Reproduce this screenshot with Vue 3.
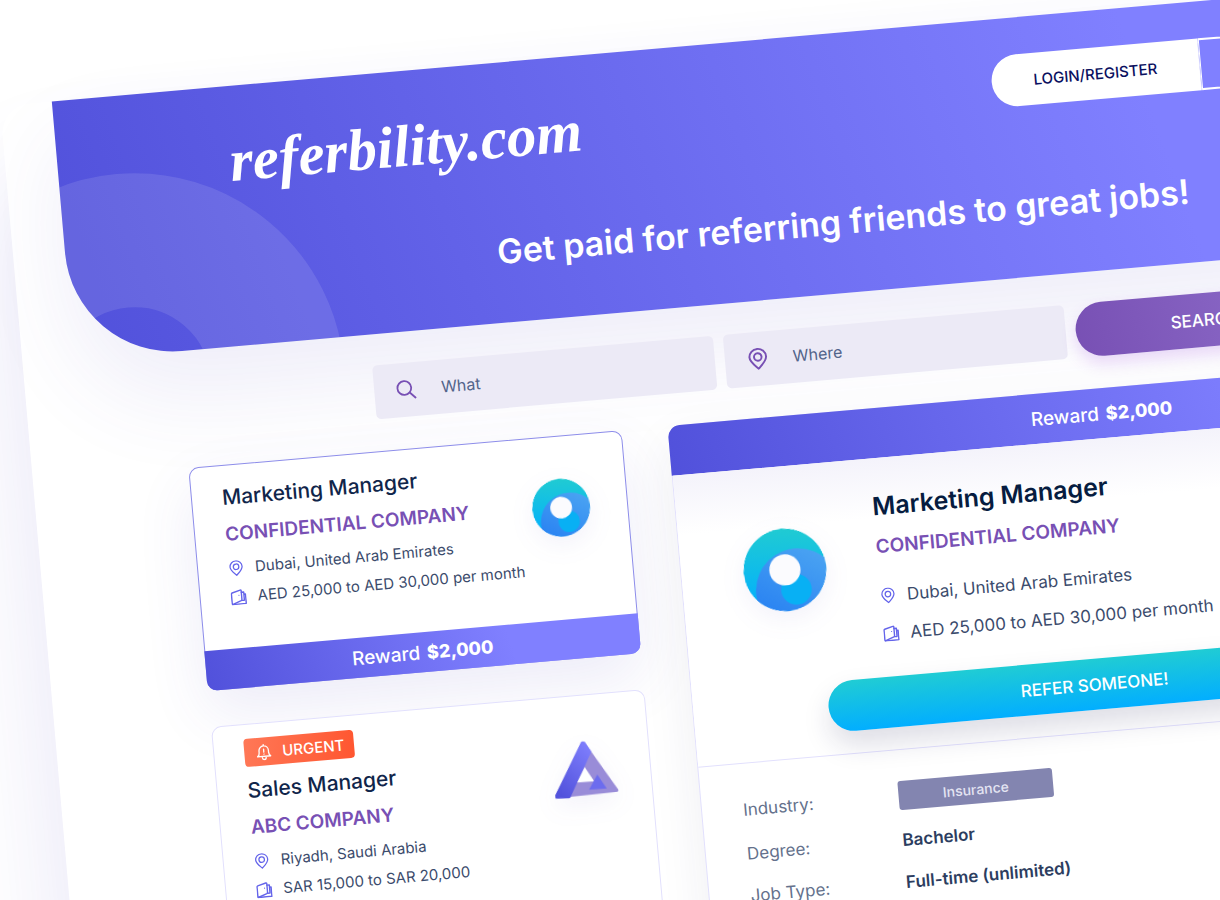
<script setup>
import { h } from 'vue'

const Pin = () =>
  h('svg', { viewBox: '0 0 16 18', fill: 'none', stroke: 'currentColor', 'aria-hidden': 'true' }, [
    h('path', { d: 'M8 17C4.6 13.6 1.2 11 1.2 7.4A6.8 6.6 0 0 1 14.8 7.4C14.8 11 11.4 13.6 8 17Z', 'stroke-linejoin': 'round' }),
    h('circle', { cx: 8, cy: 7.4, r: 3.1 }),
  ])

const Wallet = () =>
  h('svg', { viewBox: '0 0 16 16', fill: 'none', stroke: 'currentColor', 'stroke-linejoin': 'round', 'stroke-linecap': 'round', 'aria-hidden': 'true' }, [
    h('path', { d: 'M1 4.4Q1 3.6 1.8 3.4L10 1.2Q11 1 11 2V10.6Q11 11.4 10.2 11.8L1.4 15Q1 15 1 14.4Z' }),
    h('path', { d: 'M11 3.4H13.4V11.6H11M13.4 5.6H15V15H1.6' }),
    h('circle', { cx: 8.4, cy: 6.2, r: 0.6, fill: 'currentColor', stroke: 'none' }),
  ])

const Ring = () =>
  h('svg', { viewBox: '0 0 250 250', 'aria-hidden': 'true' }, [
    h('defs', [
      h('linearGradient', { id: 'sea', x1: 0, y1: 0, x2: 0, y2: 1 }, [
        h('stop', { offset: '0', 'stop-color': '#20cbd2' }),
        h('stop', { offset: '1', 'stop-color': '#00aeff' }),
      ]),
      h('linearGradient', { id: 'sky', x1: 0.7, y1: 0, x2: 0.3, y2: 0.8 }, [
        h('stop', { offset: '0', 'stop-color': '#4aa3f2' }),
        h('stop', { offset: '1', 'stop-color': '#2b84f2' }),
      ]),
      h('clipPath', { id: 'disc' }, [h('circle', { cx: 125, cy: 125, r: 125 })]),
    ]),
    h('g', { transform: 'rotate(5 125 125)', 'clip-path': 'url(#disc)' }, [
      h('circle', { cx: 125, cy: 125, r: 125, fill: 'url(#sea)' }),
      h('circle', { cx: 165, cy: 187, r: 127, fill: 'url(#sky)' }),
      h('circle', { cx: 160, cy: 184, r: 46, fill: '#08b0f4' }),
      h('circle', { cx: 125, cy: 125, r: 47, fill: '#fbfbfe' }),
    ]),
  ])

const Delta = () =>
  h('svg', { viewBox: '100 50 200 200', 'aria-hidden': 'true' }, [
    h('defs', [
      h('linearGradient', { id: 'edge', x1: 0.8, y1: 0, x2: 0.2, y2: 1 }, [
        h('stop', { offset: '0', 'stop-color': '#7c7cfb' }),
        h('stop', { offset: '1', 'stop-color': '#5252dc' }),
      ]),
    ]),
    h('g', { transform: 'rotate(5 200 150)', 'stroke-linejoin': 'round', 'stroke-width': 10 }, [
      h('path', { d: 'M190 75L287 211L111 230Z', fill: '#998cd8', stroke: '#998cd8' }),
      h('path', { d: 'M186 73L110 231L147 230L207 98L190 73Z', fill: 'url(#edge)', stroke: 'url(#edge)' }),
      h('path', { d: 'M193 143L171 189L221 185Z', fill: '#fff' }),
      h('path', { d: 'M230 165L206 210L258 206Z', fill: '#6c6cee' }),
    ]),
  ])

const jobs = [
  {
    title: 'Marketing Manager', company: 'CONFIDENTIAL COMPANY', place: 'Dubai, United Arab Emirates',
    pay: 'AED 25,000 to AED 30,000 per month', logo: Ring, active: true, reward: '$2,000',
  },
  {
    title: 'Sales Manager', company: 'ABC COMPANY', place: 'Riyadh, Saudi Arabia',
    pay: 'SAR 15,000 to SAR 20,000', logo: Delta, urgent: true, reward: '$2,000',
  },
]
const current = jobs[0]
</script>

<template>
  <div class="stage">
    <div class="sheet">
      <header class="hero">
        <div class="art"><span class="arc"></span></div>
        <div class="bar">
          <a class="brand" href="#">referbility.com</a>
          <nav class="account">
            <button class="login" type="button">LOGIN/REGISTER</button>
            <button class="ghost" type="button" aria-label="Account menu"></button>
          </nav>
        </div>
        <h1>Get paid for referring friends to great jobs!</h1>
      </header>

      <form class="search" @submit.prevent>
        <label class="field">
          <svg class="glass" viewBox="0 0 22 22" fill="none" stroke="currentColor" stroke-width="2" aria-hidden="true">
            <circle cx="9" cy="9" r="7.6" /><path d="M14.5 14.5L21 21" />
          </svg>
          <input type="text" placeholder="What" aria-label="What" />
        </label>
        <label class="field">
          <Pin class="marker" />
          <input type="text" placeholder="Where" aria-label="Where" />
        </label>
        <button class="go" type="submit">SEARCH</button>
      </form>

      <main class="board">
        <section class="list">
          <article v-for="job in jobs" :key="job.title" class="card" :class="{ active: job.active, urgent: job.urgent }">
            <div class="body">
              <div class="info">
                <span v-if="job.urgent" class="badge">
                  <svg viewBox="0 0 18 18" fill="none" stroke="currentColor" stroke-width="1.4" stroke-linejoin="round" stroke-linecap="round" aria-hidden="true">
                    <path d="M9 1.2V2.6M2 13.6C3.4 12.6 4 11.4 4 9.6V7.6A5 5 0 0 1 14 7.6V9.6C14 11.4 14.6 12.6 16 13.6ZM7 14V15A2 2 0 0 0 11 15V14M9 6V9.2M9 11.2V11.3" />
                  </svg>
                  URGENT
                </span>
                <h2>{{ job.title }}</h2>
                <p class="company">{{ job.company }}</p>
                <p class="fact"><Pin />{{ job.place }}</p>
                <p class="fact"><Wallet />{{ job.pay }}</p>
              </div>
              <div class="logo"><component :is="job.logo" /></div>
            </div>
            <footer class="reward">Reward <strong>{{ job.reward }}</strong></footer>
          </article>
        </section>

        <section class="panel">
          <div class="reward">Reward <strong>{{ current.reward }}</strong></div>
          <div class="summary">
            <div class="lead">
              <div class="logo"><Ring /></div>
              <div class="info">
                <h2>{{ current.title }}</h2>
                <p class="company">{{ current.company }}</p>
                <p class="fact"><Pin />{{ current.place }}</p>
                <p class="fact"><Wallet />{{ current.pay }}</p>
              </div>
            </div>
            <button class="refer" type="button">REFER SOMEONE!</button>
          </div>
          <dl class="details">
            <div><dt>Industry:</dt><dd class="tag">Insurance</dd></div>
            <div><dt>Degree:</dt><dd>Bachelor</dd></div>
            <div><dt>Job Type:</dt><dd>Full-time (unlimited)</dd></div>
          </dl>
        </section>
      </main>
    </div>
  </div>
</template>

<style>
body {
  margin: 0;
  background: #fff;
}
</style>

<style scoped>
* {
  box-sizing: border-box;
}
h1, h2, p, dl, dd {
  margin: 0;
}
button, input {
  font: inherit;
  border: 0;
  padding: 0;
}
.stage {
  height: 100vh;
  overflow: hidden;
  padding-top: 106px;
  font-family: Inter, "Open Sans", sans-serif;
  color: #10254a;
}
.sheet {
  width: calc(100% + 388px);
  min-height: 1300px;
  padding-left: 52px;
  background: #fff;
  border-radius: 30px 0 0 0;
  box-shadow: 0 80px 110px rgba(80, 66, 190, 0.14);
  transform: rotate(-5deg);
  transform-origin: 0 0;
}
.hero {
  position: relative;
  height: 260px;
  padding: 37px 200px 0 172px;
  border-radius: 0 0 0 108px;
  background: linear-gradient(75deg, #5151db, #8080ff 70%);
  box-shadow: 0 46px 90px rgba(80, 66, 190, 0.09);
}
.art {
  position: absolute;
  inset: 0;
  overflow: hidden;
  border-radius: inherit;
}
.arc {
  position: absolute;
  left: -152px;
  top: 78px;
  width: 420px;
  height: 420px;
  border: 134px solid rgba(255, 255, 255, 0.11);
  border-radius: 50%;
}
.bar {
  position: relative;
  display: flex;
  justify-content: space-between;
  align-items: flex-start;
}
.brand {
  color: #fff;
  font: italic 700 59px/76px "Liberation Serif", serif;
  text-decoration: none;
}
.account {
  display: flex;
  height: 52px;
}
.account button {
  width: 209px;
}
.account .login {
  border-right: 1px solid #e8e8ff;
  border-radius: 26px 0 0 26px;
  background: #fff;
  color: #0a1060;
  font-size: 15px;
  font-weight: 500;
}
.account .ghost {
  border: 2px solid #fff;
  border-left-width: 1px;
  border-radius: 0 26px 26px 0;
  background: transparent;
}
h1 {
  position: relative;
  margin: 51px -172px 0 -144px;
  text-align: center;
  color: #fff;
  font-size: 34px;
  line-height: 50px;
  font-weight: 600;
}
.search {
  position: relative;
  display: flex;
  justify-content: center;
  gap: 10px;
  padding-top: 31px;
}
.field {
  display: flex;
  align-items: center;
  width: 342px;
  height: 54px;
  padding-left: 22px;
  border-radius: 5px;
  background: #eceaf6;
  color: #7850b4;
}
.field svg {
  flex: none;
  width: 22px;
  height: 22px;
  margin-right: 24px;
}
.field .glass {
  width: 20px;
  height: 20px;
  margin-right: 25px;
}
.marker {
  stroke-width: 1.6;
}
.field input {
  flex: 1;
  min-width: 0;
  background: transparent;
  font-size: 16px;
  outline: none;
}
.field input::placeholder {
  color: #52648a;
  opacity: 1;
}
.go {
  width: 260px;
  height: 54px;
  border-radius: 27px;
  background: linear-gradient(80deg, #7850b4, #9070cc);
  box-shadow: 0 8px 16px rgba(150, 70, 220, 0.2);
  color: #fff;
  font-size: 17px;
  font-weight: 500;
}
.board {
  position: relative;
  display: grid;
  grid-template-columns: 435px 1fr;
  gap: 46px;
  margin: 32px 104px 0;
  align-items: start;
}
.list {
  display: grid;
  gap: 36px;
}
.card {
  border-radius: 10px;
  background: #fff;
  border: 1px solid #e2e0fd;
}
.active {
  border-color: #8d8dea;
  box-shadow: 0 24px 60px rgba(80, 66, 190, 0.1);
}
.body {
  display: flex;
  justify-content: space-between;
  align-items: flex-start;
  padding: 18px 33px 41px 30px;
}
.urgent .body {
  padding-top: 14px;
  padding-right: 30px;
}
.card .logo {
  display: flex;
  justify-content: center;
  width: 66px;
  margin-top: 24px;
}
.urgent .logo {
  margin-top: 26px;
}
.logo svg {
  display: block;
  width: 58px;
  height: 58px;
  border-radius: 50%;
  filter: drop-shadow(0 8px 12px rgba(80, 66, 190, 0.07));
}
.urgent .logo svg {
  flex: none;
  width: 68px;
  height: 68px;
  border-radius: 0;
}
.badge {
  display: flex;
  align-items: center;
  gap: 10px;
  width: 110px;
  height: 28px;
  margin-bottom: 10px;
  padding-left: 11px;
  border-radius: 4px;
  background: linear-gradient(100deg, #ff7857, #ff5630);
  color: #fff;
  font-size: 15px;
  font-weight: 500;
}
.badge svg {
  width: 17px;
  height: 17px;
}
h2 {
  font-size: 21px;
  line-height: 28px;
  font-weight: 500;
  white-space: nowrap;
}
.company {
  margin-top: 11px;
  color: #7850b4;
  font-size: 19px;
  line-height: 24px;
  font-weight: 600;
  white-space: nowrap;
}
.fact {
  display: flex;
  align-items: center;
  gap: 11px;
  margin-top: 9px;
  color: #3b4b6c;
  font-size: 15px;
  line-height: 20px;
  white-space: nowrap;
}
.company + .fact {
  margin-top: 12px;
}
.fact svg {
  width: 16px;
  height: 16px;
  stroke-width: 1.4;
  color: #6464ea;
}
.reward {
  display: flex;
  justify-content: center;
  align-items: center;
  gap: 7px;
  height: 40px;
  background: linear-gradient(75deg, #5151db, #8080ff 70%);
  color: #fff;
  font-size: 19px;
  font-weight: 500;
}
.reward strong {
  font-size: 18px;
  font-weight: 800;
}
.card .reward {
  margin: 0 -1px -1px;
  border-radius: 0 0 10px 10px;
}
.panel {
  min-height: 900px;
  border: 1px solid #e2e0fd;
  border-radius: 12px;
  background: #fff;
  box-shadow: 0 20px 50px rgba(40, 40, 90, 0.08);
}
.panel > .reward {
  height: 50px;
  margin: -1px -1px 0;
  border-radius: 12px 12px 0 0;
}
.summary {
  padding: 32px 62px 22px;
  border-bottom: 1px solid #e2e0fd;
  background: linear-gradient(#f4f3fb, #fff 60px);
}
.lead {
  display: flex;
  gap: 51px;
  align-items: flex-start;
}
.lead .logo {
  margin-top: 30px;
}
.lead .logo svg {
  width: 83px;
  height: 83px;
}
.lead h2 {
  font-size: 25px;
  line-height: 32px;
  font-weight: 600;
  color: #061c40;
}
.lead .company {
  margin-top: 13px;
}
.lead .fact {
  margin-top: 14px;
  font-size: 17px;
  line-height: 24px;
}
.lead .company + .fact {
  margin-top: 25px;
}
.refer {
  display: block;
  width: 534px;
  height: 51px;
  margin: 31px 0 0 73px;
  border-radius: 26px;
  background: linear-gradient(#20ccd4, #02aeff);
  box-shadow: 0 14px 28px rgba(30, 30, 80, 0.15);
  color: #fff;
  font-size: 17px;
  font-weight: 500;
}
.details {
  display: grid;
  gap: 18px;
  padding: 31px 41px;
}
.details div {
  display: flex;
  align-items: center;
}
dt {
  width: 156px;
  color: #64718c;
  font-size: 17px;
  line-height: 24px;
}
dd {
  color: #2c3d60;
  font-size: 17px;
  line-height: 24px;
  font-weight: 600;
}
.tag {
  width: 155px;
  border-radius: 3px;
  background: #8385b0;
  color: #e4e4f2;
  font-size: 14px;
  line-height: 29px;
  font-weight: 500;
  text-align: center;
}
</style>
